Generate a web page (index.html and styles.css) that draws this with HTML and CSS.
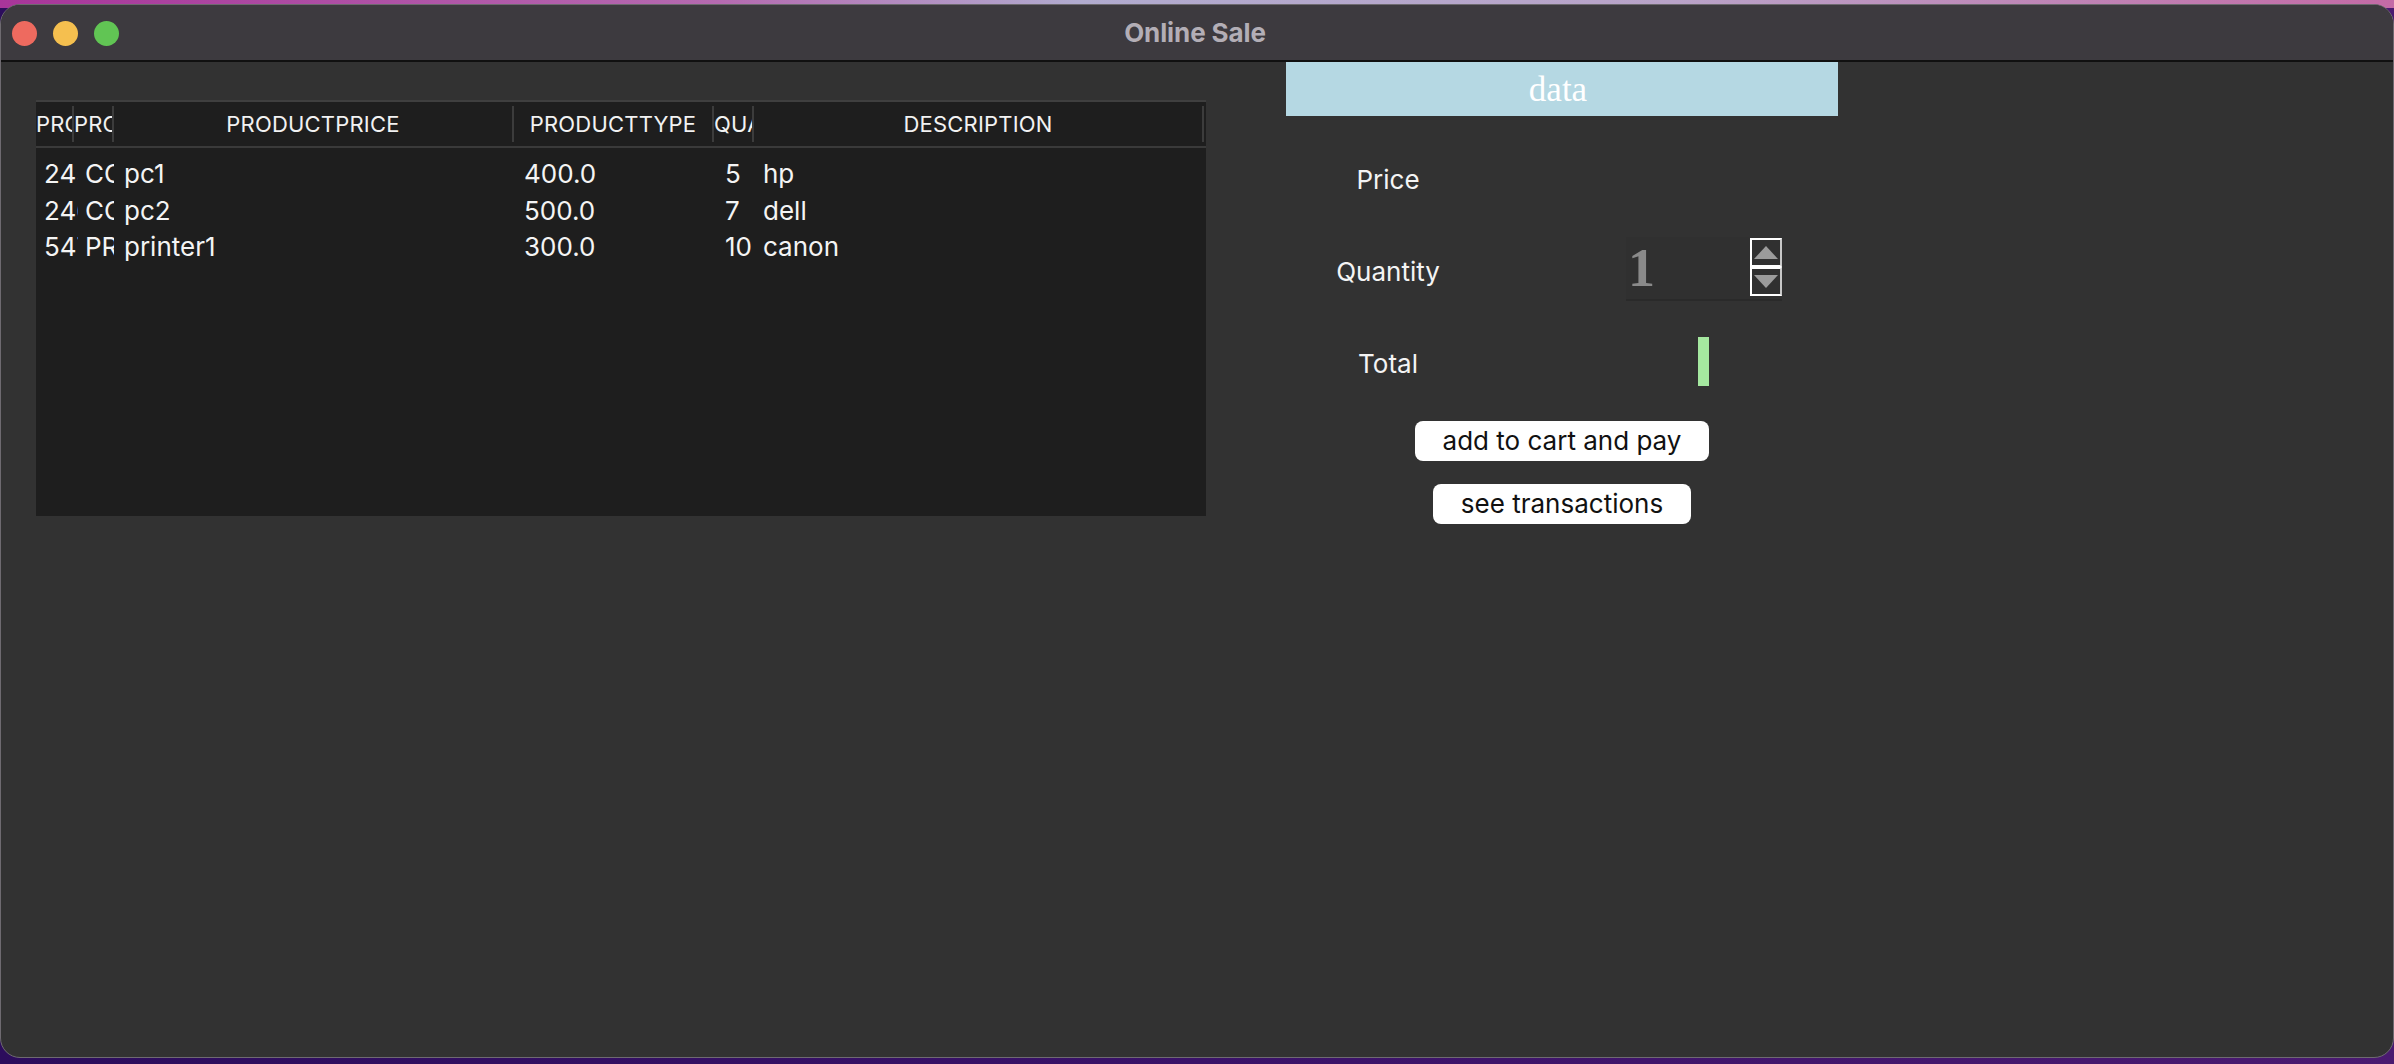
FILE: index.html
```html
<!DOCTYPE html>
<html>
<head>
<meta charset="utf-8">
<title>Online Sale</title>
<link rel="stylesheet" href="styles.css">
</head>
<body>
<div class="desktop">
  <div class="window">
    <div class="titlebar">
      <div class="lights">
        <span class="light red"></span>
        <span class="light yellow"></span>
        <span class="light green"></span>
      </div>
      <div class="title">Online Sale</div>
      <div class="spacer"></div>
    </div>
    <div class="content">
      <div class="table">
        <div class="thead">
          <div class="th">PRODUCTID</div>
          <div class="th">PRODUCTNAME</div>
          <div class="th">PRODUCTPRICE</div>
          <div class="th">PRODUCTTYPE</div>
          <div class="th">QUANTITY</div>
          <div class="th">DESCRIPTION</div>
        </div>
        <div class="tbody">
          <div class="tr">
            <div class="td c1">245</div>
            <div class="td c2">COMPUTER</div>
            <div class="td c3">pc1</div>
            <div class="td c4">400.0</div>
            <div class="td c5">5</div>
            <div class="td c6">hp</div>
          </div>
          <div class="tr">
            <div class="td c1">246</div>
            <div class="td c2">COMPUTER</div>
            <div class="td c3">pc2</div>
            <div class="td c4">500.0</div>
            <div class="td c5">7</div>
            <div class="td c6">dell</div>
          </div>
          <div class="tr">
            <div class="td c1">547</div>
            <div class="td c2">PRINTER</div>
            <div class="td c3">printer1</div>
            <div class="td c4">300.0</div>
            <div class="td c5">10</div>
            <div class="td c6">canon</div>
          </div>
        </div>
      </div>
      <div class="panel">
        <div class="panel-head">data</div>
        <div class="form">
          <div class="label">Price</div>
          <div class="value"></div>
          <div class="label">Quantity</div>
          <div class="value">
            <div class="spin">
              <span class="spin-num">1</span>
              <div class="spin-btns">
                <span class="spin-btn"><span class="tri up"></span></span>
                <span class="spin-btn"><span class="tri down"></span></span>
              </div>
            </div>
          </div>
          <div class="label">Total</div>
          <div class="value"><span class="total-bar"></span></div>
        </div>
        <div class="actions">
          <button class="btn">add to cart and pay</button>
          <button class="btn">see transactions</button>
        </div>
      </div>
    </div>
  </div>
</div>
</body>
</html>
```

FILE: styles.css
```css
* { box-sizing: border-box; }
html, body { margin: 0; padding: 0; }
body {
  width: 2394px;
  height: 1064px;
  overflow: hidden;
  font-family: Inter, "Liberation Sans", sans-serif;
}
.desktop {
  height: 1064px;
  padding-top: 4px;
  background:
    linear-gradient(90deg, #a8359a 0%, #b56ab0 30%, #b1abcf 45%, #b9a3c8 70%, #c46aa6 100%) top / 100% 8px no-repeat,
    linear-gradient(90deg, #2c0d5c 0%, #3a1268 50%, #4a1a70 100%);
}
.window {
  height: 1054px;
  border: 1px solid #6e6a70;
  border-radius: 20px;
  overflow: hidden;
  background: #323232;
  display: flex;
  flex-direction: column;
}
.titlebar {
  height: 57px;
  flex: none;
  background: #3d3a3f;
  border-bottom: 2px solid #101010;
  display: grid;
  grid-template-columns: 1fr auto 1fr;
  align-items: center;
}
.lights {
  display: flex;
  gap: 16px;
  padding-left: 11px;
  margin-top: 2px;
}
.light {
  width: 25px;
  height: 25px;
  border-radius: 50%;
  display: block;
}
.red { background: #ee6a5f; }
.yellow { background: #f5bf4f; }
.green { background: #61c554; }
.title {
  font-family: Inter, "Liberation Sans", sans-serif;
  font-weight: 700;
  font-size: 26px;
  color: #b3aeb6;
  letter-spacing: -0.1px;
  margin-left: -4px;
}

.content {
  flex: 1;
  display: flex;
  align-items: flex-start;
}

/* table */
.table {
  margin-top: 38px;
  margin-left: 35px;
  width: 1170px;
  height: 416px;
  background: #1e1e1e;
  border-top: 2px solid #3f3f3f;
  display: flex;
  flex-direction: column;
}
.thead {
  display: grid;
  grid-template-columns: 38px 40px 400px 200px 40px 450px;
  padding: 4px 0;
  border-bottom: 2px solid #3a3a3a;
}
.th {
  height: 36px;
  line-height: 36px;
  border-right: 2px solid #3c3c3c;
  color: #f2f2f2;
  font-size: 22px;
  letter-spacing: 0.2px;
  text-align: center;
  white-space: nowrap;
  overflow: hidden;
}
.tbody {
  flex: 1;
  padding-top: 8px;
}
.tr {
  display: grid;
  grid-template-columns: 42px 36px 400px 200px 40px 450px;
  height: 36.5px;
  line-height: 36px;
  font-size: 26px;
  color: #f4f4f4;
}
.td {
  white-space: nowrap;
  overflow: hidden;
  padding-left: 10px;
}
.c1 { padding-left: 8px; padding-right: 4px; }
.c2 { padding-left: 7px; padding-right: 10px; }
.c5 { padding-left: 11px; padding-right: 8px; }
.c6 { padding-left: 9px; }

/* right panel */
.panel {
  margin-left: 80px;
  width: 552px;
  display: flex;
  flex-direction: column;
  align-items: center;
}
.panel-head {
  width: 100%;
  height: 54px;
  background: #b5d8e3;
  color: #ffffff;
  font-family: "Liberation Serif", serif;
  font-size: 35px;
  line-height: 56px;
  text-align: center;
  padding-right: 8px;
}
.form {
  width: 100%;
  margin-top: 17px;
  display: grid;
  grid-template-columns: 204px 1fr;
  grid-auto-rows: 92px;
  align-items: center;
}
.label {
  text-align: center;
  font-size: 26px;
  color: #f4f4f4;
}
.value {
  display: flex;
  align-items: center;
  height: 100%;
}
.spin {
  margin-left: 136px;
  width: 156px;
  height: 64px;
  margin-top: -4px;
  background: #303030;
  border-bottom: 2px solid #2a2a2a;
  display: flex;
  align-items: center;
  justify-content: space-between;
}
.spin-num {
  font-family: "Liberation Serif", serif;
  font-weight: 700;
  font-size: 54px;
  color: #8a8a8a;
  padding-left: 2px;
  line-height: 1;
}
.spin-btns {
  display: flex;
  flex-direction: column;
  margin-right: 0;
  margin-top: -2px;
}
.spin-btn {
  width: 32px;
  height: 29px;
  border: 2px solid #ffffff;
  border-right-color: #c8c8c8;
  display: flex;
  align-items: center;
  justify-content: center;
}
.tri {
  width: 0;
  height: 0;
  border-left: 12px solid transparent;
  border-right: 12px solid transparent;
}
.tri.up { border-bottom: 13px solid #9b9b9b; }
.tri.down { border-top: 13px solid #9b9b9b; }
.total-bar {
  margin-left: 208px;
  margin-top: -4px;
  width: 11px;
  height: 49px;
  background: #a5e8a0;
  display: block;
}
.actions {
  margin-top: 12px;
  display: flex;
  flex-direction: column;
  align-items: center;
  gap: 23px;
}
.btn {
  height: 40px;
  padding: 0 28px;
  background: #ffffff;
  border: none;
  border-radius: 8px;
  color: #111;
  font-family: Inter, "Liberation Sans", sans-serif;
  font-size: 26px;
  line-height: 40px;
}
```
